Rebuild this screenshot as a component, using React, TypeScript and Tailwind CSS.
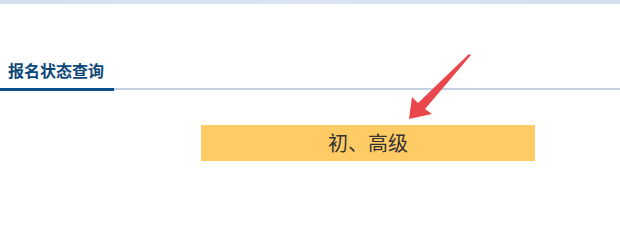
export default function App() {
  return (
    <div
      className="relative w-[620px] h-[217px] bg-white overflow-hidden"
      style={{ fontFamily: '"Noto Sans CJK SC", "Noto Sans", sans-serif' }}
    >
      {/* top strip */}
      <div className="h-[4px] bg-gradient-to-r from-[#d3dff1] via-[#dbe5f4] to-[#d2def0]" />

      {/* tab bar */}
      <div className="mt-[54px] flex items-end">
        <div className="w-[114px] pl-[8px] pb-[6px] border-b-[3px] border-[#0b4f8a] text-[16px] leading-[24px] font-bold text-[#0d4778]">
          报名状态查询
        </div>
        <div className="flex-1 mb-[1px] border-b-2 border-[#c3d0df]" />
      </div>

      {/* level box */}
      <div className="mt-[34px] ml-[201px] w-[334px] h-[36px] bg-[#ffcb64] flex items-center justify-center text-[20px] text-[#333333]">
        初、高级
      </div>

      {/* red arrow annotation */}
      <svg
        className="absolute left-0 top-0"
        width="620"
        height="217"
        viewBox="0 0 620 217"
      >
        <polygon
          points="471,55 425,109 432,114 409,119 412,97 418,103 469,54"
          fill="#e9474b"
        />
      </svg>
    </div>
  );
}
